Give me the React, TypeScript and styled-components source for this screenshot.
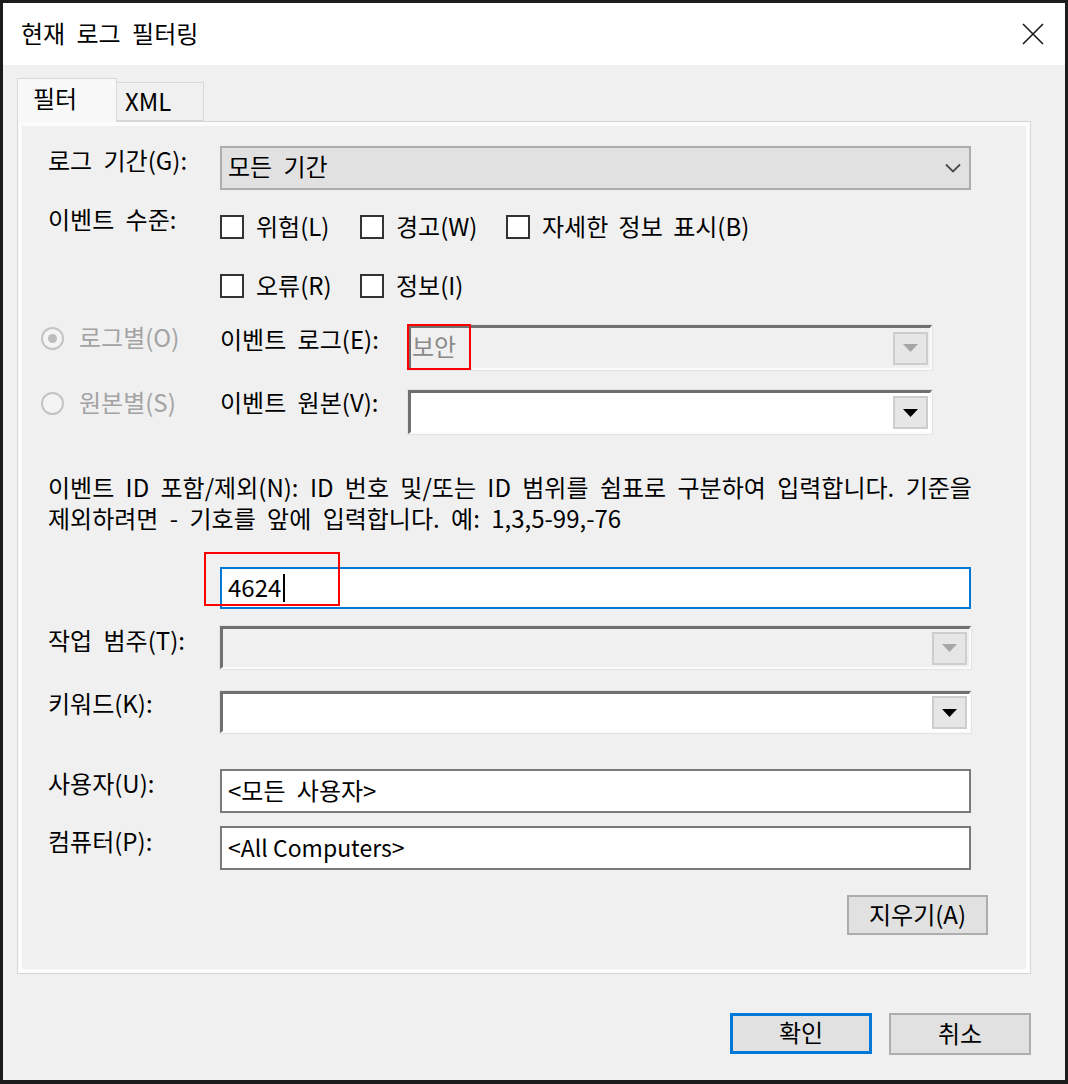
import React from "react";
import styled, { createGlobalStyle } from "styled-components";

const GlobalStyle = createGlobalStyle`
  html, body { margin: 0; padding: 0; background: #ffffff; }
  body {
    font-family: "Noto Sans CJK KR", "Noto Sans", sans-serif;
    color: #000;
  }
  * { box-sizing: border-box; }
`;

const Window = styled.div`
  width: 1068px;
  height: 1084px;
  border: 3px solid #1c1c1c;
  border-bottom-width: 4px;
  display: flex;
  flex-direction: column;
  background: #f0f0f0;
  font-size: 24px;
  line-height: 30px;
  word-spacing: 6px;
`;

const TitleBar = styled.div`
  height: 62px;
  flex: none;
  background: #ffffff;
  display: flex;
  align-items: center;
  justify-content: space-between;
  padding: 0 21px 3px 18px;
`;

const Title = styled.div`
  font-size: 24px;
  white-space: nowrap;
`;

const CloseGlyph = styled.svg`
  display: block;
  margin-top: 2px;
`;

const Body = styled.div`
  flex: 1;
  display: flex;
  flex-direction: column;
  padding: 13px 34px 0 14px;
`;

const TabStrip = styled.div`
  display: flex;
  align-items: flex-end;
  height: 43px;
  position: relative;
  z-index: 1;
`;

const Tab = styled.div<{ $active?: boolean; $width: number }>`
  width: ${(p) => p.$width}px;
  height: ${(p) => (p.$active ? 44 : 39)}px;
  margin-bottom: ${(p) => (p.$active ? -1 : 0)}px;
  border: 1px solid #d9d9d9;
  border-bottom: ${(p) => (p.$active ? "none" : "1px solid #d9d9d9")};
  border-left: ${(p) => (p.$active ? "1px solid #d9d9d9" : "none")};
  background: ${(p) => (p.$active ? "#f8f8f8" : "#f0f0f0")};
  padding-left: ${(p) => (p.$active ? 15 : 8)}px;
  padding-bottom: ${(p) => (p.$active ? 6 : 2)}px;
  display: flex;
  align-items: center;
  white-space: nowrap;
`;

const Panel = styled.div`
  border: 1px solid #d5d5d5;
  box-shadow: inset 0 0 0 4px #fcfcfc;
  background: #f0f0f0;
  padding: 24px 42px 38px 30px;
  display: flex;
  flex-direction: column;
`;

const FieldRow = styled.div<{ $top: number }>`
  display: grid;
  grid-template-columns: 172px 751px;
  align-items: start;
  margin-top: ${(p) => p.$top}px;
`;

const FieldLabel = styled.div<{ $offset?: number }>`
  padding-top: ${(p) => p.$offset ?? 2}px;
  line-height: 24px;
  white-space: nowrap;
`;

const SelectBox = styled.div`
  height: 44px;
  border: 2px solid #adadad;
  background: #e1e1e1;
  display: flex;
  align-items: center;
  justify-content: space-between;
  padding: 0 8px 0 6px;
`;

const SelectText = styled.span`
  padding-bottom: 4px;
`;

const CheckGrid = styled.div`
  display: grid;
  grid-template-columns: 140px 146px auto;
  row-gap: 29px;
  padding: 5px 0 2px;
`;

const CheckItem = styled.div`
  display: flex;
  align-items: center;
  gap: 12px;
  height: 30px;
  white-space: nowrap;
  word-spacing: 5px;
`;

const CheckText = styled.span`
  padding-bottom: 3px;
`;

const CheckBox = styled.span`
  width: 24px;
  height: 24px;
  flex: none;
  border: 2px solid #333333;
  background: #ffffff;
`;

const SourceGrid = styled.div`
  display: grid;
  grid-template-columns: 179px 188px 524px;
  grid-auto-rows: 44px;
  row-gap: 21px;
  margin-left: -7px;
  margin-top: 22px;
  align-items: start;
`;

const RadioItem = styled.div`
  display: flex;
  align-items: center;
  gap: 15px;
  height: 26px;
  color: #a3a3a3;
  white-space: nowrap;
`;

const RadioText = styled.span`
  padding-bottom: 3px;
`;

const RadioCircle = styled.span<{ $checked?: boolean }>`
  width: 23px;
  height: 23px;
  flex: none;
  border-radius: 50%;
  border: 2px solid #c4c4c4;
  background: #f4f4f4;
  display: flex;
  align-items: center;
  justify-content: center;
  &::after {
    content: "";
    width: 9px;
    height: 9px;
    border-radius: 50%;
    background: ${(p) => (p.$checked ? "#bdbdbd" : "transparent")};
  }
`;

const ClassicCombo = styled.div<{ $disabled?: boolean; $height: number }>`
  position: relative;
  height: ${(p) => p.$height}px;
  border-style: solid;
  border-width: 3px 2px 2px 3px;
  border-color: #707070 #fbfbfb #fbfbfb #707070;
  box-shadow: 0 0 0 1px #e3e3e3;
  background: ${(p) => (p.$disabled ? "#f0f0f0" : "#ffffff")};
  display: flex;
  align-items: center;
  padding-right: 2px;
`;

const ComboValue = styled.span`
  flex: 1;
  color: #8a8a8a;
  padding-left: 1px;
  padding-bottom: 5px;
  white-space: nowrap;
`;

const DropButton = styled.div`
  width: 35px;
  height: 33px;
  flex: none;
  border: 2px solid #cdcdcd;
  background: #e6e6e6;
  display: flex;
  align-items: center;
  justify-content: center;
`;

const RedMark = styled.div<{ $l: number; $t: number; $w: number; $h: number }>`
  position: absolute;
  left: ${(p) => p.$l}px;
  top: ${(p) => p.$t}px;
  width: ${(p) => p.$w}px;
  height: ${(p) => p.$h}px;
  border: 2px solid #ff0000;
  pointer-events: none;
`;

const HelpText = styled.div`
  margin-top: 37px;
  display: flex;
  flex-direction: column;
`;

const HelpLine = styled.div`
  height: 31px;
  line-height: 31px;
  white-space: nowrap;
`;

const TextInput = styled.div<{ $focused?: boolean; $latin?: boolean }>`
  position: relative;
  height: ${(p) => (p.$focused ? 42 : 44)}px;
  border: 2px solid ${(p) => (p.$focused ? "#0078d7" : "#7a7a7a")};
  background: #ffffff;
  display: flex;
  align-items: center;
  padding: 0 0 3px 6px;
  white-space: nowrap;
  font-size: ${(p) => (p.$latin ? 23 : 24)}px;
  word-spacing: ${(p) => (p.$latin ? 0 : 6)}px;
`;

const Caret = styled.span`
  display: inline-block;
  width: 2px;
  height: 28px;
  margin: 3px 0 0 2px;
  background: #000000;
`;

const ButtonRow = styled.div<{ $top: number }>`
  display: flex;
  justify-content: flex-end;
  margin-top: ${(p) => p.$top}px;
`;

const PushButton = styled.div<{ $default?: boolean; $w: number; $h: number }>`
  width: ${(p) => p.$w}px;
  height: ${(p) => p.$h}px;
  border: ${(p) => (p.$default ? "3px solid #0078d7" : "2px solid #adadad")};
  background: #e1e1e1;
  display: flex;
  align-items: center;
  justify-content: center;
  padding-bottom: 3px;
  white-space: nowrap;
  word-spacing: 0;
`;

const Footer = styled.div`
  display: flex;
  justify-content: flex-end;
  gap: 17px;
  padding-top: 39px;
`;

const Chevron = () => (
  <svg width="16" height="10" viewBox="0 0 16 10">
    <polyline points="1,1.5 8,8.5 15,1.5" fill="none" stroke="#4a4a4a" strokeWidth="1.8" />
  </svg>
);

const Arrow = ({ disabled }: { disabled?: boolean }) => (
  <svg width="15" height="8" viewBox="0 0 15 8">
    <polygon points="0,0 15,0 7.5,8" fill={disabled ? "#a6a6a6" : "#000000"} />
  </svg>
);

export default function App() {
  return (
    <>
      <GlobalStyle />
      <Window>
        <TitleBar>
          <Title>현재 로그 필터링</Title>
          <CloseGlyph width="22" height="22" viewBox="0 0 22 22">
            <path d="M1 1 L21 21 M21 1 L1 21" stroke="#1a1a1a" strokeWidth="1.6" />
          </CloseGlyph>
        </TitleBar>
        <Body>
          <TabStrip>
            <Tab $active $width={100}>필터</Tab>
            <Tab $width={87}>XML</Tab>
          </TabStrip>
          <Panel>
            <FieldRow $top={0}>
              <FieldLabel $offset={2}>로그 기간(G):</FieldLabel>
              <SelectBox>
                <SelectText>모든 기간</SelectText>
                <Chevron />
              </SelectBox>
            </FieldRow>

            <FieldRow $top={17}>
              <FieldLabel $offset={0}>이벤트 수준:</FieldLabel>
              <CheckGrid>
                <CheckItem><CheckBox /><CheckText>위험(L)</CheckText></CheckItem>
                <CheckItem><CheckBox /><CheckText>경고(W)</CheckText></CheckItem>
                <CheckItem><CheckBox /><CheckText>자세한 정보 표시(B)</CheckText></CheckItem>
                <CheckItem><CheckBox /><CheckText>오류(R)</CheckText></CheckItem>
                <CheckItem><CheckBox /><CheckText>정보(I)</CheckText></CheckItem>
              </CheckGrid>
            </FieldRow>

            <SourceGrid>
              <RadioItem><RadioCircle $checked /><RadioText>로그별(O)</RadioText></RadioItem>
              <FieldLabel $offset={2}>이벤트 로그(E):</FieldLabel>
              <ClassicCombo $disabled $height={45}>
                <ComboValue>보안</ComboValue>
                <DropButton><Arrow disabled /></DropButton>
                <RedMark $l={-4} $t={-4} $w={64} $h={46} />
              </ClassicCombo>
              <RadioItem><RadioCircle /><RadioText>원본별(S)</RadioText></RadioItem>
              <FieldLabel $offset={0}>이벤트 원본(V):</FieldLabel>
              <ClassicCombo $height={44}>
                <ComboValue />
                <DropButton><Arrow /></DropButton>
              </ClassicCombo>
            </SourceGrid>

            <HelpText>
              <HelpLine>이벤트 ID 포함/제외(N): ID 번호 및/또는 ID 범위를 쉼표로 구분하여 입력합니다. 기준을</HelpLine>
              <HelpLine>제외하려면 - 기호를 앞에 입력합니다. 예: 1,3,5-99,-76</HelpLine>
            </HelpText>

            <FieldRow $top={34}>
              <FieldLabel />
              <TextInput $focused>
                4624
                <Caret />
                <RedMark $l={-18} $t={-17} $w={136} $h={54} />
              </TextInput>
            </FieldRow>

            <FieldRow $top={17}>
              <FieldLabel $offset={2}>작업 범주(T):</FieldLabel>
              <ClassicCombo $disabled $height={43}>
                <ComboValue />
                <DropButton><Arrow disabled /></DropButton>
              </ClassicCombo>
            </FieldRow>

            <FieldRow $top={22}>
              <FieldLabel $offset={0}>키워드(K):</FieldLabel>
              <ClassicCombo $height={42}>
                <ComboValue />
                <DropButton><Arrow /></DropButton>
              </ClassicCombo>
            </FieldRow>

            <FieldRow $top={36}>
              <FieldLabel $offset={2}>사용자(U):</FieldLabel>
              <TextInput>&lt;모든 사용자&gt;</TextInput>
            </FieldRow>

            <FieldRow $top={13}>
              <FieldLabel $offset={3}>컴퓨터(P):</FieldLabel>
              <TextInput $latin>&lt;All Computers&gt;</TextInput>
            </FieldRow>

            <ButtonRow $top={25}>
              <PushButton $w={141} $h={40}>지우기(A)</PushButton>
            </ButtonRow>
          </Panel>
          <Footer>
            <PushButton $default $w={142} $h={41}>확인</PushButton>
            <PushButton $w={142} $h={42}>취소</PushButton>
          </Footer>
        </Body>
      </Window>
    </>
  );
}
